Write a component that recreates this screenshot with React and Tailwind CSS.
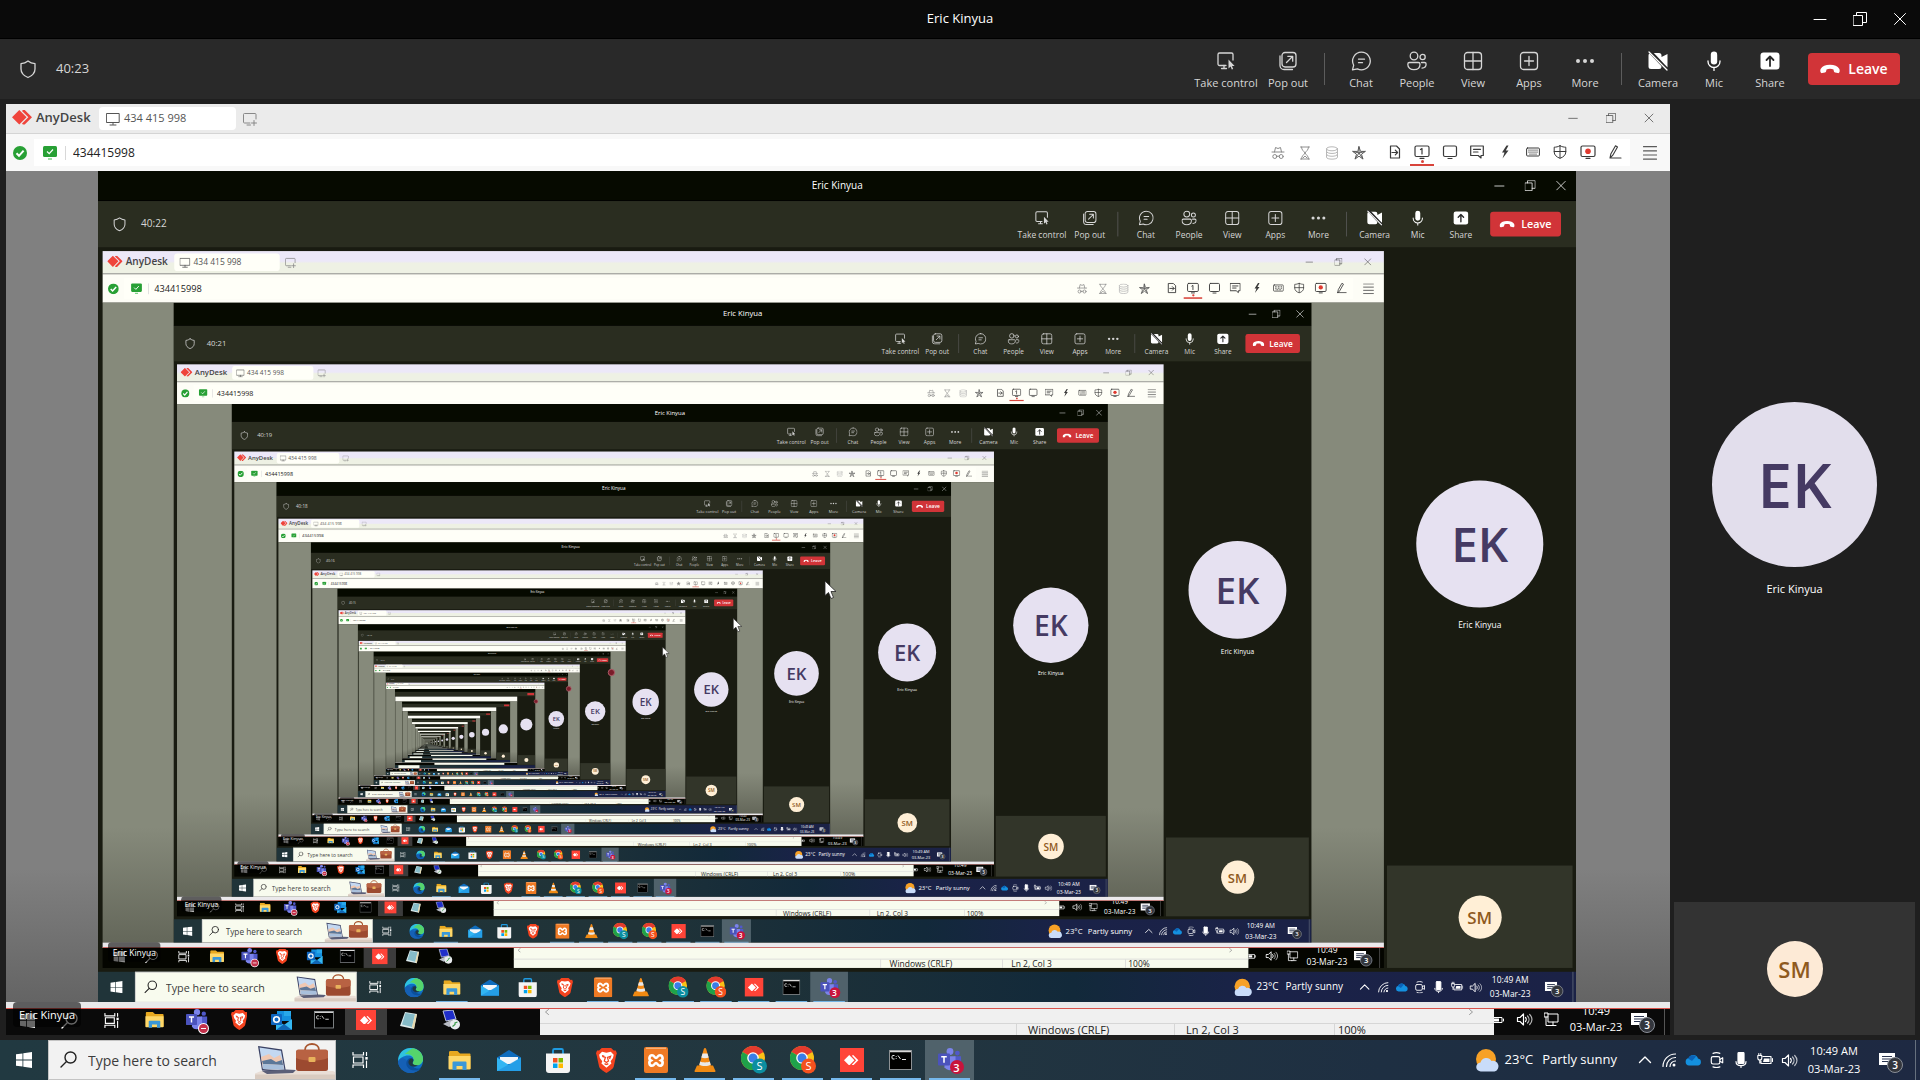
import React from "react";

/* Levels with full detail, and the level at which the repetition ends. */
const DETAIL = 9;
const DEPTH = 24;
const TIMES = ["40:23", "40:22", "40:21", "40:19", "40:18", "40:16", "40:15", "40:13"];

/* The local screen is neutral grey; every re-encoded copy has a green cast. */
const LOCAL = {
  page: "bg-[#1f1f1f]",
  title: "bg-[#0a0a0a]",
  tools: "bg-[#292929]",
  tabs: "bg-[#ebebeb]",
  address: "bg-[#f8f8f8]",
  panel: "bg-white",
  stage: "bg-[linear-gradient(#808080_0%,#808080_84%,#646464_100%)]",
  tile: "bg-[#333333]",
  ek: "bg-[#e2deec]",
  sm: "bg-[#fdead6]",
  strip: "bg-[#e9e9ea]",
  remote: "bg-[#0a0a0a]",
  notepad: "bg-[#f0f0f0]",
  search: "bg-[#f2f2f2]",
  taskbar: "bg-[linear-gradient(90deg,#213941_0%,#22363f_45%,#1e2f42_72%,#1e2942_100%)]",
};

const ENCODED = {
  page: "bg-[#191b11]",
  title: "bg-[#060a00]",
  tools: "bg-[#2a2d20]",
  tabs: "bg-[linear-gradient(#ece8f8_0%,#ece8f8_45%,#eef1e4_55%,#eef1e4_100%)]",
  address: "bg-[#fdfdf6]",
  panel: "bg-[#fffff8]",
  stage: "bg-[linear-gradient(#868a7b_0%,#868a7b_82%,#64675a_100%)]",
  tile: "bg-[#323529]",
  ek: "bg-[#e6e1f1]",
  sm: "bg-[#ffefd6]",
  strip: "bg-[#ebe9ec]",
  remote: "bg-[#040500]",
  notepad: "bg-[#f8fbee]",
  search: "bg-[#f8fbee]",
  taskbar: "bg-[linear-gradient(90deg,#203439_0%,#203338_42%,#12293a_66%,#1a2248_78%,#1b2246_100%)]",
};

function Svg({ size = 20, sw = 1.3, className = "", children, box = 20 }) {
  return (
    <svg width={size} height={size} viewBox={`0 0 ${box} ${box}`} fill="none" stroke="currentColor" strokeWidth={sw} strokeLinecap="round" strokeLinejoin="round" className={`shrink-0 ${className}`} aria-hidden="true">
      {children}
    </svg>
  );
}

/* ---------- meeting toolbar icons ---------- */
const TakeControl = () => (
  <Svg>
    <path d="M10 14.5H3.5A1.5 1.5 0 0 1 2 13V3.500A1.500 1.500 0 0 1 3.500 2h12A1.500 1.500 0 0 1 17 3.500V9" />
    <path d="M8 14.500v3M5.500 17.500h5" />
    <path d="M12.500 8.500v9l2.100-2 1.200 3 1.400-.6-1.200-2.900h2.600z" fill="currentColor" stroke="none" />
  </Svg>
);
const PopOut = () => (
  <Svg>
    <rect x="4" y="1.500" width="14" height="14.500" rx="3" />
    <path d="M2 5v9.500A4 4 0 0 0 6 18.500h8.500M8.500 11.500l6-6M9.800 5.300h4.900v4.900" />
  </Svg>
);
const Chat = () => (
  <Svg>
    <path d="M10.500 1.200a8.800 8.800 0 1 1-4.100 16.600L1.500 18.800l1.200-4.600A8.800 8.800 0 0 1 10.500 1.200zM7.500 8.200h6M7.500 11.700h4" />
  </Svg>
);
const People = () => (
  <Svg>
    <circle cx="7" cy="5" r="3.800" />
    <circle cx="15.600" cy="6" r="2.600" />
    <path d="M2.500 11.500h8.800a1.700 1.700 0 0 1 1.700 1.700c0 3.600-2.600 5.500-6.100 5.500S.8 16.800.8 13.200a1.700 1.700 0 0 1 1.700-1.700zM14.500 11.500h3a1.600 1.600 0 0 1 1.600 1.600c0 2.700-1.600 4-4.100 4" />
  </Svg>
);
const View = () => (
  <Svg>
    <rect x="1.500" y="1.500" width="17" height="17" rx="3" />
    <path d="M10 1.500v17M1.500 10h17" />
  </Svg>
);
const AppsIcon = () => (
  <Svg>
    <rect x="1.500" y="1.500" width="17" height="17" rx="3" />
    <path d="M10 5.500v9M5.500 10h9" />
  </Svg>
);
const More = () => (
  <Svg>
    <g fill="currentColor" stroke="none">
      <circle cx="3" cy="10" r="2" /><circle cx="10" cy="10" r="2" /><circle cx="17" cy="10" r="2" />
    </g>
  </Svg>
);
const CameraOff = () => (
  <Svg className="text-white">
    <path d="M3 2h8a2.500 2.500 0 0 1 2.500 2.500V6L19.500 3v13.500L13.500 13v2.500A2.500 2.500 0 0 1 11 18H3a2.500 2.500 0 0 1-2.500-2.500v-11A2.500 2.500 0 0 1 3 2z" fill="currentColor" stroke="none" />
    <path d="M2 .5L20 19.500" stroke="#292929" strokeWidth="3.500" />
    <path d="M1 1l18 18" />
  </Svg>
);
const Mic = () => (
  <Svg className="text-white">
    <rect x="6.800" y="0.500" width="6.400" height="13" rx="3.200" fill="currentColor" stroke="none" />
    <path d="M4 10v.5a6 6 0 0 0 12 0V10M10 16.500v3" />
  </Svg>
);
const Share = () => (
  <Svg className="text-white">
    <rect x="0.500" y="1.500" width="19" height="17" rx="3" fill="currentColor" stroke="none" />
    <path d="M10 15V5.500M6.500 9L10 5.500 13.500 9" stroke="#292929" strokeWidth="1.800" />
  </Svg>
);

function ToolButton({ icon: Icon, label, width = "w-14" }) {
  return (
    <button type="button" className={`flex flex-col items-center gap-1 pt-1 text-[#d6d6d6] ${width}`}>
      <Icon />
      <span className="text-[11px] leading-4 whitespace-nowrap">{label}</span>
    </button>
  );
}

function WindowButtons({ width, className }) {
  return (
    <div className={`flex ${className}`}>
      <button type="button" aria-label="Minimize" className={`flex justify-center ${width}`}>
        <Svg size={14} box={14} sw={1}><path d="M1 7.500h12" /></Svg>
      </button>
      <button type="button" aria-label="Restore" className={`flex justify-center ${width}`}>
        <Svg size={14} box={14} sw={1}><path d="M.5 3.500h9v10h-9zM3.500 3.500V.500h10v10h-4" strokeLinejoin="miter" /></Svg>
      </button>
      <button type="button" aria-label="Close" className={`flex justify-center ${width}`}>
        <Svg size={14} box={14} sw={1}><path d="M1.500 1.500l11 11M12.500 1.500l-11 11" /></Svg>
      </button>
    </div>
  );
}

function MeetingBars({ t, time }) {
  return (
    <>
      <header className={`grid h-[39px] grid-cols-[1fr_auto_1fr] items-center border-b border-black text-white ${t.title}`}>
        <span />
        <h1 className="text-[13px]">Eric Kinyua</h1>
        <WindowButtons width="w-10" className="justify-end" />
      </header>
      <div className={`flex h-[60px] items-center justify-between pr-5 pl-[18px] ${t.tools}`}>
        <div className="flex items-center gap-[18px] text-[#d6d6d6]">
          <Svg><path d="M10 2c2 1.600 4.300 2.400 7 2.600V10c0 4-2.600 6.700-7 8.500C5.600 16.700 3 14 3 10V4.600C5.700 4.400 8 3.600 10 2z" /></Svg>
          <span className="text-[13px]">{time}</span>
        </div>
        <div className="flex items-center">
          <ToolButton icon={TakeControl} label="Take control" width="w-[68px]" />
          <ToolButton icon={PopOut} label="Pop out" />
          <span className="mx-2 h-8 w-px bg-[#5c5c5c]" />
          <ToolButton icon={Chat} label="Chat" />
          <ToolButton icon={People} label="People" />
          <ToolButton icon={View} label="View" />
          <ToolButton icon={AppsIcon} label="Apps" />
          <ToolButton icon={More} label="More" />
          <span className="mx-2 h-8 w-px bg-[#5c5c5c]" />
          <ToolButton icon={CameraOff} label="Camera" />
          <ToolButton icon={Mic} label="Mic" />
          <ToolButton icon={Share} label="Share" />
          <button type="button" className="ml-[10px] flex h-8 w-[92px] items-center justify-center gap-2 rounded bg-[#d13438] text-sm font-semibold text-white">
            <svg width="20" height="10" viewBox="0 0 20 10" fill="currentColor" aria-hidden="true"><path d="M10 .8c4.500 0 7.700 1.500 9.200 4 .6 1 .6 2.100.3 3.300-.2.800-.9 1.200-1.700 1L15 8.500c-.7-.2-1.100-.7-1.200-1.400l-.3-1.700C12.500 5 11.300 4.800 10 4.800S7.500 5 6.500 5.400l-.3 1.700C6.100 7.800 5.700 8.300 5 8.500l-2.800.6c-.8.200-1.500-.2-1.700-1C.2 6.900.2 5.800.8 4.800 2.300 2.300 5.500.8 10 .8z" /></svg>
            Leave
          </button>
        </div>
      </div>
    </>
  );
}

/* ---------- AnyDesk window ---------- */
const barIcons = [
  ["Privacy", <Svg key="a" size={14} box={14} sw={1}><path d="M1 6h12M3.500 6l1-4.500 2.500 1 2.500-1 1 4.500M5.500 10.200h3" /><circle cx="3.800" cy="10.500" r="2" /><circle cx="10.200" cy="10.500" r="2" /></Svg>, "text-[#8a8a8a]"],
  ["History", <Svg key="b" size={14} box={14} sw={1}><path d="M2.500 1h9M2.500 13h9M3.500 1c0 3.500 2.500 4 3.500 6 1-2 3.500-2.500 3.500-6M3.500 13c0-3.500 2.500-4 3.500-6 1 2 3.500 2.500 3.500 6M5 12l2-2 2 2" /></Svg>, "text-[#909090]"],
  ["Records", <Svg key="c" size={14} box={14} sw={1}><ellipse cx="7" cy="2.800" rx="5.500" ry="2" /><path d="M1.500 2.800v8.400c0 2.600 11 2.600 11 0V2.800M1.500 5.600c0 2.600 11 2.600 11 0M1.500 8.400c0 2.600 11 2.600 11 0" /></Svg>, "text-[#b8b8b8]"],
  ["Favorite", <Svg key="d" size={14} box={14} sw={1}><path d="M7 .8l1.500 4.600h4.800L9.500 8.200l1.400 4.800L7 10.200 3.100 13l1.400-4.800L.7 5.400h4.800zM7 1v6l6-1.500M7 7l3.800 5.800M7 7l-3.800 5.800M7 7L1 5.500" /></Svg>, "text-[#5a5a5a]"],
];
const sessionIcons = [
  ["File transfer", <Svg key="e" size={14} box={14} sw={1.200}><path d="M2.500 1h6l3 3v9h-9zM4 7.500h5.500M7.300 5.200l2.300 2.300-2.300 2.300" /></Svg>],
  ["Monitor 1", <Svg key="f" size={16} box={16} sw={1.200}><rect x="1" y="2" width="14" height="10.500" rx="1.500" /><path d="M6.500 5.500L8 4.500V10M6 14.300h4" /></Svg>],
  ["Display", <Svg key="g" size={16} box={16} sw={1.200}><rect x="1.500" y="2" width="13" height="10.500" rx="1.500" /><path d="M6 14.500h4" /></Svg>],
  ["Chat", <Svg key="h" size={14} box={14} sw={1.200}><path d="M.7 1h12.600v9.500H11L11 13l-2.800-2.500H.7zM3.500 4.300h7M3.500 7h4.500" /></Svg>],
  ["Actions", <Svg key="i" size={14} box={14} sw={1}><path d="M8.500.5L4 7.500h2.500L4.500 13.500l6-8H7.800L10.500.5z" fill="currentColor" stroke="none" /></Svg>],
  ["Keyboard", <Svg key="j" size={14} box={14} sw={1}><rect x=".6" y="3" width="12.800" height="8" rx="1" /><path d="M2.500 5.200h9M2.500 7.200h9M3.500 9.200h7" strokeDasharray="1 1" strokeLinecap="butt" strokeWidth="1.300" /></Svg>],
  ["Permissions", <Svg key="k" size={14} box={14} sw={1}><path d="M7 .8c2 1 4 1.400 5.800 1.400V7c0 3-2.300 5-5.800 6.300C3.500 12 1.200 10 1.200 7V2.200C3 2.200 5 1.800 7 .8zM7 1v12M1.200 6.500h11.600" /></Svg>],
  ["Record", <Svg key="l" size={16} box={16} sw={1.200}><rect x="1" y="2" width="14" height="10.500" rx="1.500" /><circle cx="8" cy="7.200" r="2.800" fill="#e03a30" stroke="none" /><path d="M6 14.300h4" /></Svg>],
  ["Whiteboard", <Svg key="m" size={14} box={14} sw={1.100}><path d="M2 13h11M2 13l.8-4L7.500.8l2 1.200L4.800 10.200z" /></Svg>],
];

function Diamonds({ size = 22, color = "#ef443b" }) {
  return (
    <svg width={size} height={(size * 16) / 22} viewBox="0 0 22 16" aria-hidden="true" className="shrink-0">
      <path d="M8 0l8 8-8 8-8-8zM12 0h2l8 8-8 8h-2l-1-1 7-7-7-7z" fill={color} />
    </svg>
  );
}

function AnyDeskBars({ t }) {
  return (
    <>
      <div className={`flex h-[30px] items-center border-b border-[#d4d4d4] ${t.tabs}`}>
        <div className="flex w-[93px] items-center gap-1 pb-[2px] pl-[6px] text-[13px] font-semibold whitespace-nowrap text-[#444]">
          <Diamonds size={20} />
          AnyDesk
        </div>
        <button type="button" className={`flex h-[23px] w-[137px] items-center gap-1 rounded-sm pl-[7px] text-[11px] text-[#555] ${t.panel}`}>
          <Svg size={14} box={14} sw={1}><path d="M.8 1.500h12.400v9H.8zM7 10.500v2M4 13h6" /></Svg>
          434 415 998
        </button>
        <button type="button" aria-label="New tab" className="flex w-7 justify-center text-[#888]">
          <Svg size={14} box={14} sw={1}><path d="M7 11H1.500a1 1 0 0 1-1-1V2.500a1 1 0 0 1 1-1h10.500a1 1 0 0 1 1 1V7M4 13h3.500M11 8.500v5M8.500 11h5" /></Svg>
        </button>
        <WindowButtons width="w-[38px]" className="ml-auto pr-[2px] pb-px text-[#444] [&_svg]:size-[10px]" />
      </div>
      <div className={`flex h-[37px] items-center ${t.address}`}>
        <div className="flex w-7 justify-center">
          <svg width="14" height="14" viewBox="0 0 14 14" aria-hidden="true"><circle cx="7" cy="7" r="7" fill="#28a035" /><path d="M3.500 7.200l2.500 2.600 4.600-5.200" fill="none" stroke="#fff" strokeWidth="2" /></svg>
        </div>
        <div className={`flex h-[27px] min-w-0 flex-1 items-center ${t.panel}`}>
          <svg width="16" height="15" viewBox="0 0 16 15" className="ml-2 shrink-0" aria-hidden="true"><rect x="1" y="1" width="14" height="11" rx="1.500" fill="#28a035" /><path d="M5 6.500l2.200 2.200L11 4.500" fill="none" stroke="#fff" strokeWidth="1.200" /><path d="M6 14h4" stroke="#7fd488" strokeWidth="1.500" /></svg>
          <span className="mx-[7px] h-[14px] w-px shrink-0 bg-[#d8d8d8]" />
          <input aria-label="Remote address" defaultValue="434415998" className="min-w-0 flex-1 bg-transparent text-xs text-[#222] outline-none" />
          <div className="mr-[9px] grid w-[108px] grid-cols-4">
            {barIcons.map(([name, icon, tone]) => (
              <button key={name} type="button" aria-label={name} className={`flex items-center justify-center ${tone}`}>{icon}</button>
            ))}
          </div>
          <div className="mr-px grid w-[248px] grid-cols-9 text-[#3a3a3a]">
            {sessionIcons.map(([name, icon]) => (
              <button key={name} type="button" aria-label={name} className="relative flex h-[27px] items-center justify-center pb-px">
                {icon}
                {name === "Monitor 1" && (
                  <span className="absolute inset-x-[2px] bottom-0 flex flex-col items-center">
                    <span className="size-[3px] rounded-full bg-[#d8433a]" />
                    <span className="mt-px h-[2px] w-6 bg-[#d8433a]" />
                  </span>
                )}
              </button>
            ))}
          </div>
        </div>
        <button type="button" aria-label="Menu" className="flex w-10 justify-center text-[#5a5a5a]">
          <Svg size={14} box={14} sw={1.200}><path d="M0.500 .6h13M.5 4.800h13M.5 9h13M.5 13.200h13" /></Svg>
        </button>
      </div>
    </>
  );
}

/* ---------- desktop application icons ---------- */
const WindowsLogo = ({ size = 16 }) => (
  <svg width={size} height={size} viewBox="0 0 16 16" fill="#fff" aria-hidden="true"><path d="M0 2.300l6.500-.9v6.200H0zM7.300 1.300L16 0v7.600H7.300zM0 8.400h6.500v6.200L0 13.700zM7.300 8.400H16V16l-8.700-1.300z" /></svg>
);
const Loupe = ({ size = 17, className }) => (
  <Svg size={size} box={17} sw={1.400} className={className}><circle cx="10.500" cy="6.500" r="5.500" /><path d="M6.500 10.500L1 16" /></Svg>
);
const TaskView = ({ size = 16 }) => (
  <Svg size={size} box={16} sw={1.200} className="text-white"><path d="M1 .5v2.500h10.500V.5M1 15.500V13h10.500v2.500M1.500 5h9.500v6H1.500zM14.500.5v3M14.500 9v6.500" strokeLinejoin="miter" /><path d="M13.300 5h2.400v2.600h-2.400z" fill="currentColor" stroke="none" /></Svg>
);
const Edge = () => (
  <svg width="25" height="25" viewBox="0 0 24 24" aria-hidden="true">
    <circle cx="12" cy="12" r="12" fill="#0f6fc4" />
    <path d="M.3 10C1.500 4 6.300 0 12 0c7 0 12 4.800 12 10.500 0 3.500-2.600 6-6 6-2.600 0-4-1-4-2 0-.8 1-1.200 1-3.200C15 9 13 7.200 10 7.200 5.500 7.200 1.500 9.500.3 13z" fill="#2fc3df" />
    <path d="M14 .2C20 1 24 5.500 24 10.500c0 3.500-2.600 6-6 6-2.600 0-4-1-4-2 0-.8 1-1.200 1-3.200 0-4-4-6-8.500-5.500C9 3.500 11.500 2 14 .2z" fill="#55d46c" />
    <path d="M8.700 12.500c-.6 5 3.300 9.500 9.800 9 1.200-.1 2.500-.7 3.500-1.500C19.800 22.500 16 24 12 24 5 24 .3 18.500 0 13c2-3.500 5.500-4.500 8.700-.5z" fill="#1560b5" />
    <path d="M9 11.500c-1 1.500-1.500 3.500-.5 5.700 1.600 3.400 5.500 5 9.500 4.300 1.600-.3 3-1.200 4-2-5 1-9-1-8.500-5 .6-.9 1.400-1.500 1.400-3.200C14.900 9.500 11 8.500 9 11.500z" fill="#0b4f9c" />
    <path d="M14.500 11c.8 1.500-.8 2.500-.5 3.700.5 1.500 3 2.300 5.500 1.600-3.200 3.200-9.500 1.500-9.500-2.800C10 11 13.300 9 14.500 11z" fill="#203841" />
  </svg>
);
const Folder = ({ size = 23 }) => (
  <svg width={size} height={(size * 19) / 23} viewBox="0 0 23 19" aria-hidden="true">
    <path d="M1 1.500C1 .7 1.500 0 2.300 0h7.200L12 2.500h9.500c.6 0 1 .4 1 1V18H1z" fill="#e8a920" />
    <path d="M.5 5h22v12.500a1 1 0 0 1-1 1h-20a1 1 0 0 1-1-1z" fill="#ffd869" />
    <path d="M4.500 19v-7.500a1 1 0 0 1 1-1h12a1 1 0 0 1 1 1V19h-4v-4h-6v4z" fill="#3b98d8" />
  </svg>
);
const Mail = () => (
  <svg width="24" height="21" viewBox="0 0 24 21" aria-hidden="true">
    <path d="M0 7.500L12 0l12 7.500V21H0z" fill="#0f6cbd" />
    <path d="M3 7h18v7H3z" fill="#f3f6fa" />
    <path d="M0 7.500l12 7.500 12-7.500V21H0z" fill="#32b5f3" /><path d="M0 21L24 7.500V21z" fill="#1b8fe0" opacity=".6" />
  </svg>
);
const Store = () => (
  <svg width="24" height="25" viewBox="0 0 24 25" aria-hidden="true">
    <path d="M7 7V2.500A1.500 1.500 0 0 1 8.500 1h7A1.500 1.500 0 0 1 17 2.500V7" fill="none" stroke="#1f9be2" strokeWidth="1.800" />
    <path d="M0 5.500h24V22a3 3 0 0 1-3 3H3a3 3 0 0 1-3-3z" fill="#f4f4f4" />
    <path d="M7 10h4.500v4.500H7z" fill="#f25022" /><path d="M12.500 10H17v4.500h-4.500z" fill="#7fba00" /><path d="M7 15.500h4.500V20H7z" fill="#00a4ef" /><path d="M12.500 15.500H17V20h-4.500z" fill="#ffb900" />
  </svg>
);
const Brave = ({ size = 25 }) => (
  <svg width={(size * 20) / 24} height={size} viewBox="0 0 20 24" aria-hidden="true">
    <path d="M10 0h4.500L17 2.500l2-.2L20 5l-.6 2L17 18c-.4 1.500-2.500 3.200-7 6-4.500-2.800-6.600-4.500-7-6L.6 7 0 5l1-2.700 2 .2L5.500 0z" fill="#f4431f" />
    <path d="M10 4.500l4.200-.8L17 6.500l-.7 3-2.300 3.300.8 2.200-4.800 4-4.800-4 .8-2.200-2.300-3.300-.7-3 2.800-2.800z" fill="#fff" />
    <path d="M6 8l3 1-1 3.500 2 1.500 2-1.500L11 9l3-1-1 2.500M5.800 7.200L8 8M10 16l-1.800-1M10 16l1.800-1" fill="none" stroke="#f4431f" strokeWidth="1.200" />
  </svg>
);
const Xampp = () => (
  <svg width="24" height="26" viewBox="0 0 24 26" aria-hidden="true">
    <rect width="24" height="26" rx="2" fill="#ef7a24" /><path d="M2 1.200h20" stroke="#fbc89c" />
    <path d="M8 8.200c2.500 0 2.500 2.800 4 2.800s1.500-2.800 4-2.800 3.700 4 1.200 5.300c2.500 1.300 1.500 5.300-1.200 5.300-2.500 0-2.500-2.800-4-2.800s-1.500 2.800-4 2.800c-2.700 0-3.700-4-1.200-5.300C4.300 12.200 5.500 8.200 8 8.200z" fill="none" stroke="#fff" strokeWidth="2.600" />
  </svg>
);
const Vlc = () => (
  <svg width="22" height="24" viewBox="0 0 22 24" aria-hidden="true">
    <path d="M3 17.500h16l2.500 5.500c0 .6-.4 1-1 1h-19c-.6 0-1-.4-1-1z" fill="#f08a12" />
    <path d="M9.800 1c.3-1.200 2.100-1.200 2.400 0L17 18c-1 2.500-11 2.500-12 0z" fill="#f48b16" />
    <path d="M8.500 5.500h5l1.200 4c-2 1-5.400 1-7.400 0zM6.200 13.500c2.500 1.200 7.100 1.200 9.600 0l.9 3.200c-2.500 1.700-8.900 1.700-11.400 0z" fill="#e9e9e9" />
  </svg>
);
const Chrome = ({ badge }) => (
  <svg width="26" height="28" viewBox="0 0 26 28" aria-hidden="true">
    <circle cx="12" cy="12" r="12" fill="#fbc116" />
    <path d="M12 12L1.600 6A12 12 0 0 1 22.400 6z" fill="#e33b2e" /><path d="M12 0a12 12 0 0 1 10.400 6H12z" fill="#e33b2e" />
    <path d="M12 12L1.600 6A12 12 0 0 0 12 24l5-9z" fill="#1fa24a" />
    <circle cx="12" cy="12" r="5.800" fill="#fff" /><circle cx="12" cy="12" r="4.500" fill="#3a7de8" />
    <circle cx="18.500" cy="20" r="7.500" fill={badge} />
    <text x="18.500" y="24" textAnchor="middle" fontSize="11" fill="#fff" fontFamily="Open Sans, sans-serif">S</text>
  </svg>
);
const AnyDeskTile = ({ size = 24 }) => (
  <span className="flex items-center justify-center bg-[#ff4438]" style={{ width: size, height: size }}>
    <svg width={size * 0.6} height={size * 0.44} viewBox="0 0 22 16" fill="#fff" aria-hidden="true"><path d="M8 0l8 8-8 8-8-8zM12 1l2-1 8 8-8 8-2-1 6.500-7z" /></svg>
  </span>
);
const Cmd = ({ size = 23 }) => (
  <svg width={size} height={(size * 20) / 23} viewBox="0 0 23 20" aria-hidden="true">
    <rect x=".5" y=".5" width="22" height="19" fill="#000" stroke="#8d9194" /><path d="M1 1.500h21" stroke="#d8d8d8" strokeWidth="1.500" />
    <path d="M5.500 5.500H4a1 1 0 0 0-1 1V8a1 1 0 0 0 1 1h1.500M7.200 6v.8M7.200 8.200V9M9 5.500l2.500 3.500M13 9.500h4" fill="none" stroke="#e8e8e8" strokeWidth="1" />
  </svg>
);
const TeamsApp = ({ children, size = 26 }) => (
  <span className="relative flex">
    <svg width={size} height={(size * 25) / 26} viewBox="0 0 26 25" aria-hidden="true">
      <circle cx="13" cy="3.800" r="3.700" fill="#7b83eb" /><circle cx="21" cy="5.500" r="2.600" fill="#5059c9" />
      <path d="M17.500 9H25v7a4.500 4.500 0 0 1-7.500 3.500z" fill="#5059c9" /><path d="M7 9h12v8.500a6.500 6.500 0 0 1-12 3.400z" fill="#7b83eb" />
      <rect y="6" width="13" height="13" rx="1" fill="#4b53bc" /><path d="M3.500 9.500h6M6.500 9.500v6.500" stroke="#fff" strokeWidth="1.700" />
    </svg>
    {children}
  </span>
);
const Outlook = () => (
  <svg width="21" height="20" viewBox="0 0 21 20" aria-hidden="true">
    <path d="M6 1h14v10H6z" fill="#1490df" /><path d="M13 1h7v5h-7z" fill="#28a8ea" /><path d="M5 9l8 6 8-6v10a1 1 0 0 1-1 1H5z" fill="#35b8f1" /><path d="M5 20L13 14l8 6z" fill="#1066b5" />
    <rect y="4" width="11" height="11" rx="1" fill="#0f66c0" /><circle cx="5.500" cy="9.500" r="2.800" fill="none" stroke="#fff" strokeWidth="1.600" />
  </svg>
);
const Notes = () => (
  <svg width="19" height="19" viewBox="0 0 19 19" aria-hidden="true"><path d="M6 1l12 2-3 15-14-3z" fill="#dcebec" /><path d="M6.500 2l9.500 1.500-3 12.500L3 13.500z" fill="#86bcc8" /><path d="M16 4l2-1-3 15-2-2z" fill="#e6d9ae" /></svg>
);
const Terminal = () => (
  <svg width="20" height="20" viewBox="0 0 20 20" aria-hidden="true"><path d="M2 1l10-1 3 9-10 2z" fill="#1f2ec9" stroke="#bcc4d8" /><path d="M2 14l8-4 6 3-8 4z" fill="#b9bdc6" /><circle cx="14" cy="14.500" r="5" fill="#e9ecee" /><path d="M11.500 16.500l2.500-2v-1.500l2.500-1" stroke="#3c9b4a" fill="none" strokeWidth="1.200" /></svg>
);
const Notification = () => (
  <span className="relative flex text-white">
    <svg width="16" height="15" viewBox="0 0 16 15" fill="currentColor" aria-hidden="true"><path d="M0 0h16v12h-4v3l-3.500-3H0z" /><path d="M3 3.500h10M3 6h10M3 8.500h6" stroke="#2a3550" strokeWidth="1.200" /></svg>
    <span className="absolute top-1 left-2 flex size-4 items-center justify-center rounded-full border border-[#8a8f98] bg-[#33363d] text-[10px] leading-none font-semibold">3</span>
  </span>
);
const Speaker = () => (
  <Svg size={17} box={17} sw={1.200}><path d="M1.500 6.500h2.500L7.500 3v11L4 10.500H1.500z" /><path d="M9.500 6.500c1 1 1 3 0 4" /><path d="M11.500 5c2 2 2 5 0 7M13.700 3.500c3 3 3 7 0 10" opacity=".7" /></Svg>
);

/* Illustration at the end of the search field. */
const SearchArt = () => (
  <svg width="80" height="38" viewBox="0 0 80 38" className="shrink-0" aria-hidden="true">
    <path d="M0 32.500l6-2.500h72l2 1v7H0z" fill="#e9ded6" /><path d="M0 33.500h80V38H0z" fill="#d9cbc0" />
    <path d="M3 5l24 3.500 4 22.500-24-1.500z" fill="#3a4164" /><path d="M4.500 6.500L26 9.700l3.500 19.500-21.500-1.200z" fill="#c3d8f1" />
    <path d="M6 16l8-3 5 4 6-3 2 5 2 10-21-1z" fill="#efc8b2" /><path d="M7 20l9-2 5 3 6-2 1 5-20-1z" fill="#5c7798" /><path d="M7.500 23l20.500 1 1 5-21-1z" fill="#a9c0dc" />
    <path d="M7 30l24-1.500 10 .5-3 3-26 1z" fill="#5b5f78" />
    <path d="M50 9c0-8 14-8 14 0" fill="none" stroke="#a8562f" strokeWidth="1.800" />
    <rect x="41" y="9" width="32" height="21" rx="2.500" fill="#9c4a30" /><path d="M41 11a2.500 2.500 0 0 1 2.500-2.500h27A2.500 2.500 0 0 1 73 11v6c-8 3.500-24 3.500-32 0z" fill="#b86243" />
    <rect x="53.500" y="16" width="7" height="5" rx="1" fill="#e8b25c" />
  </svg>
);

/* ---------- remote taskbar under the video ---------- */
function RemoteTaskbar({ t }) {
  const icons = [
    ["Start", <WindowsLogo key="1" size={15} />],
    ["Search", <Loupe key="2" className="text-white" />],
    ["Task View", <TaskView key="3" size={15} />],
    ["File Explorer", <Folder key="4" size={19} />],
    ["Teams", <TeamsApp key="5" size={22}><span className="absolute right-0 bottom-[-2px] flex size-[9px] items-center justify-center rounded-full bg-[#c4314b] ring-1 ring-white"><span className="h-px w-[5px] bg-white" /></span></TeamsApp>],
    ["Brave", <Brave key="6" size={20} />],
    ["Outlook", <Outlook key="7" />],
    ["Command Prompt", <Cmd key="8" size={20} />],
    ["AnyDesk", <AnyDeskTile key="9" size={20} />],
    ["Notepad++", <Notes key="10" />],
    ["PuTTY", <Terminal key="11" />],
  ];
  return (
    <div className={`flex h-[26px] overflow-hidden ${t.remote}`}>
      <div className="grid w-[466px] shrink-0 grid-cols-11">
        {icons.map(([name, icon]) => (
          <button key={name} type="button" aria-label={name} className={`flex h-[26px] items-center justify-center pb-1 ${name === "AnyDesk" ? "bg-[#3c3c3c]" : ""}`}>{icon}</button>
        ))}
      </div>
      <div className={`ml-[68px] flex min-w-0 flex-1 flex-col text-[#222] ${t.notepad}`}>
        <div className="flex h-[14px] shrink-0 items-start justify-between px-1 text-[#999]">
          <Svg size={6} box={6} sw={1}><path d="M4.500.5L1.500 3l3 2.500" /></Svg>
          <Svg size={6} box={6} sw={1} className="mr-4"><path d="M1.500.5l3 2.500-3 2.500" /></Svg>
        </div>
        <div className="flex h-3 justify-end border-t border-[#d6d6d6] text-[11px] leading-3 whitespace-nowrap">
          <span className="w-[158px] border-l border-[#d6d6d6] pl-[11px]">Windows (CRLF)</span>
          <span className="w-[160px] border-l border-[#d6d6d6] pl-[11px]">Ln 2, Col 3</span>
          <span className="w-[160px] border-l border-[#d6d6d6] pl-[3px]">100%</span>
        </div>
      </div>
      <div className="flex w-[176px] shrink-0 items-start text-white">
        <Svg size={10} box={10} sw={1} className="mt-[6px]"><path d="M0 2.500h8v5H0M9.500 4v2" /><path d="M0 3.500h5v3H0z" fill="currentColor" stroke="none" /></Svg>
        <button type="button" aria-label="Volume" className="mt-[2px] ml-[12px]"><Speaker /></button>
        <button type="button" aria-label="Network" className="mt-[3px] ml-[11px]"><Svg size={15} box={15} sw={1}><path d="M4 2h10v8H4V5M.5 1h3.500v4H.5zM2 5v8.500h5M9 10v3M6 13.500h6" /></Svg></button>
        <div className="-mt-[6px] ml-3 flex w-[50px] flex-col items-center text-[11px] leading-4 whitespace-nowrap">
          <span>10:49</span>
          <span>03-Mar-23</span>
        </div>
        <button type="button" aria-label="Notifications" className="mt-1 ml-[10px]"><Notification /></button>
        <span className="ml-auto mr-[5px] h-full w-px bg-[#555]" />
      </div>
    </div>
  );
}

/* ---------- Windows taskbar ---------- */
function Taskbar({ t }) {
  const badge = <span className="absolute top-[12px] left-3 flex size-[14px] items-center justify-center rounded-full bg-[#c8143c] text-[11px] leading-none font-semibold text-white">3</span>;
  const apps = [
    ["Edge", <Edge key="1" />, false],
    ["File Explorer", <Folder key="2" />, true],
    ["Mail", <Mail key="3" />, false],
    ["Microsoft Store", <Store key="4" />, false],
    ["Brave", <Brave key="5" />, false],
    ["XAMPP", <Xampp key="6" />, true],
    ["VLC", <Vlc key="7" />, true],
    ["Chrome, teal profile", <Chrome key="8" badge="#0c8ea0" />, true],
    ["Chrome, orange profile", <Chrome key="9" badge="#f4511e" />, true],
    ["AnyDesk", <AnyDeskTile key="10" />, true],
    ["Command Prompt", <Cmd key="11" />, true],
    ["Teams", <TeamsApp key="12" size={24}>{badge}</TeamsApp>, true],
  ];
  return (
    <footer className={`flex h-10 items-center text-white ${t.taskbar}`}>
      <button type="button" aria-label="Start" className="flex w-12 shrink-0 justify-center"><WindowsLogo /></button>
      <label className={`flex h-10 w-72 shrink-0 items-end gap-2 overflow-hidden border border-[#c4c4c4] pl-[11px] ${t.search}`}>
        <Loupe className="mb-[11px] text-[#222]" />
        <input aria-label="Search" placeholder="Type here to search" className="mb-2 min-w-0 flex-1 bg-transparent pl-[3px] text-sm text-[#333] outline-none placeholder:text-[#3c3c3c]" />
        <SearchArt />
      </label>
      <button type="button" aria-label="Task View" className="flex w-12 shrink-0 justify-center"><TaskView /></button>
      <div className="ml-[2px] grid w-[588px] shrink-0 grid-cols-12">
        {apps.map(([name, icon, open]) => (
          <button key={name} type="button" aria-label={name} className={`relative flex h-10 items-center justify-center ${name === "Teams" ? "bg-[#50626b]" : ""}`}>
            {icon}
            {open && <span className="absolute inset-x-1 bottom-0 h-[2px] bg-[#76b9ed]" />}
          </button>
        ))}
      </div>
      <div className="ml-auto flex items-center">
        <button type="button" className="mr-[16px] flex items-center text-[13px] whitespace-nowrap">
          <svg width="24" height="24" viewBox="0 0 24 24" className="mr-[6px]" aria-hidden="true"><circle cx="11" cy="11" r="10" fill="#f7a126" /><path d="M6 23.500a4.500 4.500 0 0 1-.5-9A6 6 0 0 1 16.500 13a4.500 4.500 0 0 1 3 10.500z" fill="#c9dcf9" /></svg>
          23°C
          <span className="ml-[9px]">Partly sunny</span>
        </button>
        <div className="grid w-[168px] grid-cols-7 justify-items-center">
          <button type="button" aria-label="Show hidden icons"><Svg size={14} box={14} sw={1.400}><path d="M1.500 9.500L7 4l5.500 5.500" /></Svg></button>
          <button type="button" aria-label="Wi-Fi"><Svg size={14} box={14} sw={1.200}><path d="M1 13.500A12.500 12.500 0 0 1 13.500 1M4.500 13.500a9 9 0 0 1 9-9M8 13.500A5.500 5.500 0 0 1 13.500 8" /><circle cx="12" cy="12" r="1.500" fill="currentColor" stroke="none" /></Svg></button>
          <button type="button" aria-label="OneDrive"><svg width="17" height="14" viewBox="0 0 17 14" aria-hidden="true"><path d="M4 12.500a3.800 3.800 0 0 1-.3-7.500A5 5 0 0 1 13 5.500a3.600 3.600 0 0 1 .3 7z" fill="#1490df" /><path d="M3 5.500a5 5 0 0 1 8-2L7 8z" fill="#0a63b8" /></svg></button>
          <button type="button" aria-label="Meet Now"><Svg size={16} box={14} sw={1}><rect x="2" y="4" width="7.500" height="6.500" rx="1.500" /><path d="M9.500 6.500l2.500-1.500v4.500L9.500 8M3.500 1.200c2-.9 4-.9 6 0M3.500 13c2 .9 4 .9 6 0" /></Svg></button>
          <button type="button" aria-label="Microphone"><Svg size={16} box={16} sw={1.200}><rect x="5" y=".5" width="6" height="11" rx="1" fill="currentColor" /><path d="M3 9.500c0 5.500 10 5.500 10 0M8 14v1.500" /></Svg></button>
          <button type="button" aria-label="Battery"><Svg size={16} box={16} sw={1.100}><path d="M6 4.500h8v7H4V9M15.500 6.500v3M.8 3.500h4v2.500a2 2 0 0 1-4 0zM1.800 1.500v2M3.800 1.500v2M2.800 8v3" /><path d="M7 6.500h5.500v3.500H6z" fill="currentColor" stroke="none" /></Svg></button>
          <button type="button" aria-label="Volume"><Speaker /></button>
        </div>
        <div className="ml-1 flex w-[58px] flex-col items-center text-[11px] leading-[18px] whitespace-nowrap">
          <span>10:49 AM</span>
          <span>03-Mar-23</span>
        </div>
        <button type="button" aria-label="Notifications" className="ml-4"><Notification /></button>
        <span className="mr-1 ml-5 h-10 w-px bg-[#66707e]" />
      </div>
    </footer>
  );
}

function Pointer() {
  return (
    <svg width="14" height="20" viewBox="0 0 14 20" className="absolute top-[580px] left-[824px]" aria-hidden="true"><path d="M1 1v14.500l3.500-3 2.500 6 2.500-1-2.500-6H12z" fill="#fff" stroke="#222" strokeWidth=".8" /></svg>
  );
}

function BusyPointer() {
  return (
    <span className="absolute top-[580px] left-[824px] size-4 rounded-full border-2 border-[#b0606c] bg-[#7a1c2a]" />
  );
}

/* A desktop too small for its lettering and icons: only its coloured areas remain. */
function DistantDesktop({ level }) {
  const t = ENCODED;
  return (
    <div className={`flex h-[1080px] w-[1920px] flex-col overflow-hidden ${t.page}`}>
      <div className={`h-[39px] ${t.title}`} />
      <div className={`flex h-[60px] items-center justify-end pr-5 ${t.tools}`}>
        <span className="h-8 w-[92px] rounded bg-[#d13438]" />
      </div>
      <div className="flex flex-1 py-[5px] pl-[6px]">
        <div className="flex min-w-0 flex-1 flex-col">
          <div className={`h-[67px] ${t.address}`} />
          <div className={`flex flex-1 justify-center pr-[2px] ${t.stage}`}>
            <div className="h-[831px] w-[1478px] shrink-0 overflow-hidden">
              {level < DEPTH && (
                <div className="origin-top-left scale-[0.77]">
                  <DistantDesktop level={level + 1} />
                </div>
              )}
            </div>
          </div>
          <div className={`h-[7px] ${t.strip}`} />
          <div className={`flex h-[26px] ${t.remote}`}>
            <span className={`mr-[176px] ml-[534px] flex-1 ${t.notepad}`} />
          </div>
        </div>
        <div className="flex w-[250px] shrink-0 flex-col pr-[5px] pl-1">
          <div className="flex flex-1 items-center justify-center pb-9">
            <span className={`size-[165px] rounded-full ${t.ek}`} />
          </div>
          <div className={`flex h-[133px] items-center justify-center ${t.tile}`}>
            <span className={`size-14 rounded-full ${t.sm}`} />
          </div>
        </div>
      </div>
      <div className={`flex h-10 ${t.taskbar}`}>
        <span className={`ml-12 w-72 ${t.search}`} />
      </div>
    </div>
  );
}

/* One desktop: meeting window, shared AnyDesk session, taskbar. The session shows the same desktop again. */
function Desktop({ level }) {
  const t = level === 0 ? LOCAL : ENCODED;
  return (
    <div className={`relative flex flex-col overflow-hidden ${level === 0 ? "min-h-screen w-full" : "h-[1080px] w-[1920px]"} ${t.page}`}>
      <MeetingBars t={t} time={TIMES[Math.min(level, TIMES.length - 1)]} />
      <main className="flex flex-1 py-[5px] pl-[6px]">
        <section className="relative flex min-w-0 flex-1 flex-col" aria-label="Shared screen">
          <AnyDeskBars t={t} />
          <div className={`flex flex-1 justify-center pr-[2px] ${t.stage}`}>
            <div className="h-[831px] w-[1478px] shrink-0 overflow-hidden">
              <div inert className="origin-top-left scale-[0.77]">
                {level < DETAIL ? <Desktop level={level + 1} /> : <DistantDesktop level={level + 1} />}
              </div>
            </div>
          </div>
          <div className={`h-[7px] border-b border-[#d9534c] ${t.strip}`} />
          <RemoteTaskbar t={t} />
          <span className="absolute bottom-2 left-[7px] flex h-[25px] items-center rounded bg-black/60 px-[6px] pt-px text-[11px] font-medium text-white">Eric Kinyua</span>
        </section>
        <aside className="flex w-[250px] shrink-0 flex-col pr-[5px] pl-1" aria-label="Participants">
          <div className="flex flex-1 flex-col items-center justify-center gap-[14px] pb-2">
            <div className={`flex size-[165px] items-center justify-center rounded-full text-[62px] leading-none font-semibold text-[#453a63] ${t.ek}`}>EK</div>
            <span className="text-[11px] leading-4 text-white">Eric Kinyua</span>
          </div>
          <div className={`flex h-[133px] items-center justify-center ${t.tile}`}>
            <div className={`flex size-14 items-center justify-center rounded-full text-[22px] leading-none font-semibold text-[#8f5a1e] ${t.sm}`}>SM</div>
          </div>
        </aside>
      </main>
      <Taskbar t={t} />
      {level < 3 ? <Pointer /> : level < 6 ? <BusyPointer /> : null}
    </div>
  );
}

export default function App() {
  return (
    <div className="font-['Open_Sans',sans-serif]">
      <Desktop level={0} />
    </div>
  );
}
